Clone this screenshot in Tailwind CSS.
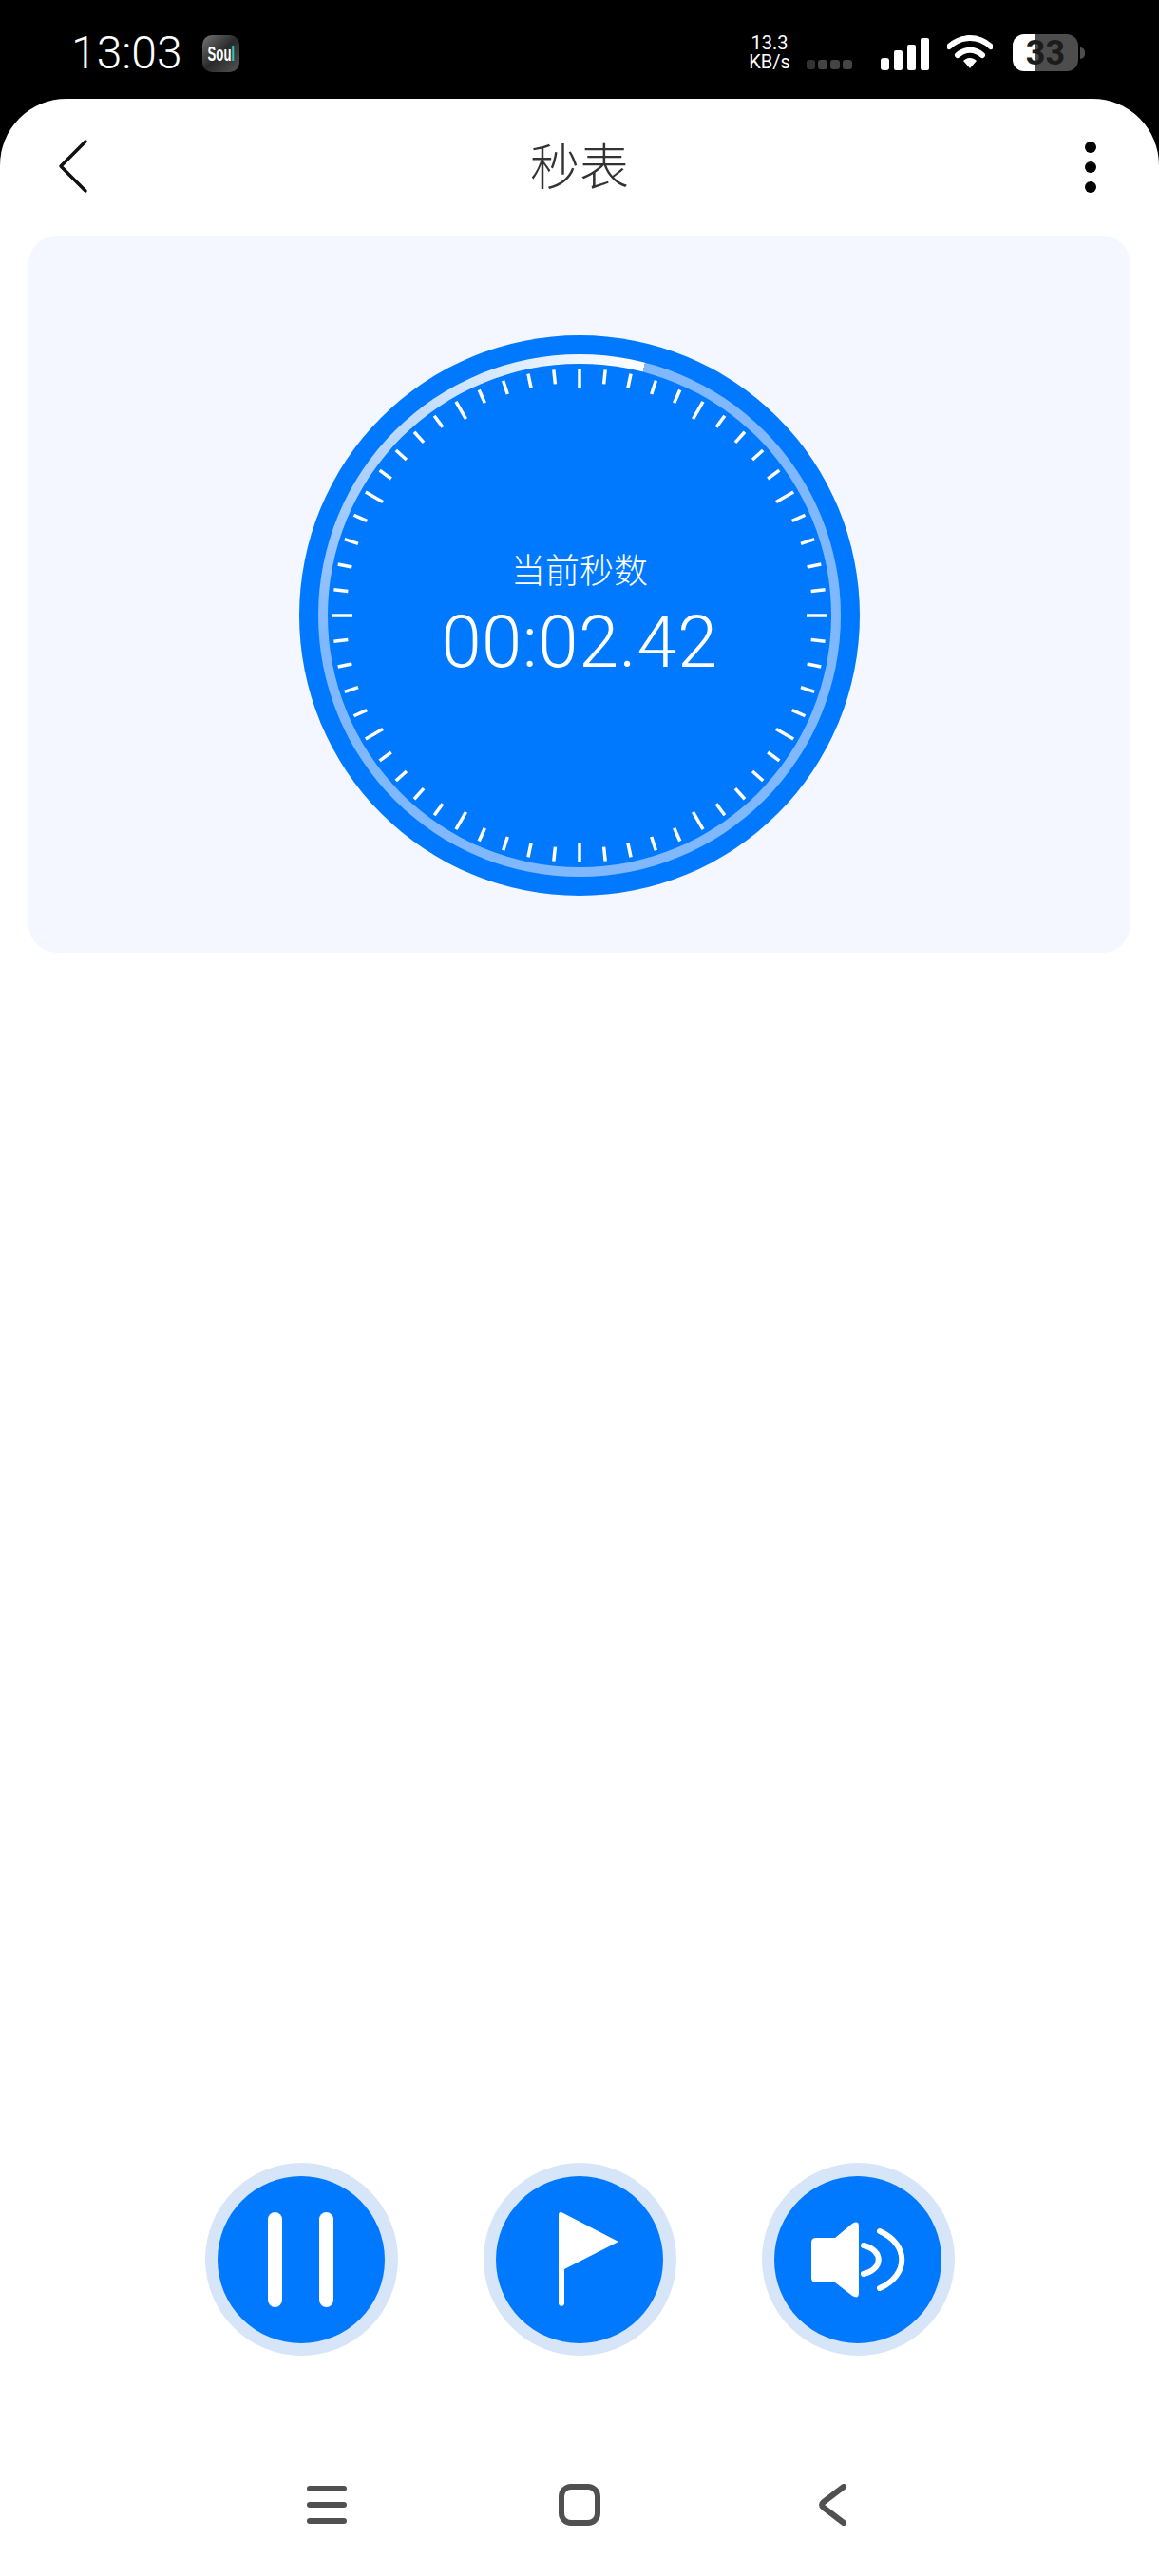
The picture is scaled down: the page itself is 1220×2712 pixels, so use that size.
<!DOCTYPE html>
<html lang="zh">
<head>
    <meta charset="UTF-8">
    <meta name="viewport" content="width=device-width, initial-scale=1.0">
    <title>秒表</title>
    <script src="https://cdn.jsdelivr.net/npm/@tailwindcss/browser@4"></script>
</head>
<body class="bg-black font-['Roboto','Noto_Sans_CJK_SC',sans-serif]">
    <div class="w-[1220px] h-[2712px] flex flex-col overflow-hidden">
        <!-- status bar -->
        <div class="h-[104px] shrink-0 relative flex items-start text-white">
            <div class="ml-[75px] mt-[30px] w-[116px] text-[48px] leading-[52px] font-light whitespace-nowrap">13:03</div>
            <div class="ml-[22px] mt-[37px] w-[39px] h-[39px] rounded-[10px] bg-gradient-to-br from-[#777777] via-[#2a2a2a] to-[#555555] flex items-center justify-center">
                <span class="font-['Liberation_Sans',sans-serif] font-bold text-[22px] leading-none scale-x-[0.6] whitespace-nowrap">Sou<span class="text-[#1fd0c8]">l</span></span>
            </div>
            <div class="ml-auto mt-[35px] w-[44px] text-[20px] leading-[20px] text-center mr-[17px]">13.3<br>KB/s</div>
            <div class="mt-[63px] flex gap-[3px] mr-[30px]">
                <span class="w-[9px] h-[10px] rounded-[3px] bg-[#333333]"></span>
                <span class="w-[10px] h-[10px] rounded-[3px] bg-[#444444]"></span>
                <span class="w-[10px] h-[10px] rounded-[3px] bg-[#444444]"></span>
                <span class="w-[10px] h-[10px] rounded-[3px] bg-[#444444]"></span>
            </div>
            <div class="mt-[40px] h-[34px] flex items-end gap-[5px] mr-[19px]">
                <span class="w-[9px] h-[13px] rounded-[3px] bg-white"></span>
                <span class="w-[9px] h-[21px] rounded-[2px] bg-white"></span>
                <span class="w-[9px] h-[27px] rounded-[2px] bg-white"></span>
                <span class="w-[9px] h-[34px] rounded-[2px] bg-white"></span>
            </div>
            <svg class="mt-[36px] mr-[21px]" width="48" height="37" viewBox="0 0 48 37">
                <path d="M2 13 C15 1 33 1 46 13" fill="none" stroke="#fff" stroke-width="6" stroke-linecap="round"/>
                <path d="M11 22 C19 15 29 15 37 22" fill="none" stroke="#fff" stroke-width="6" stroke-linecap="round"/>
                <path d="M17 28 C21 24 27 24 31 28 L24 36 Z" fill="#fff"/>
            </svg>
            <div class="mt-[36px] mr-[85px] relative w-[69px] h-[39px] rounded-[12px] overflow-visible">
                <div class="absolute inset-0 rounded-[12px] overflow-hidden flex">
                    <div class="w-[23px] bg-white"></div>
                    <div class="flex-1 bg-[#4d4d4d]"></div>
                </div>
                <div class="absolute inset-0 flex items-center justify-center text-[36px] leading-none font-bold text-[#1c1c1c]">33</div>
                <div class="absolute left-[71px] top-[14px] w-[5px] h-[12px] rounded-r-full bg-[#4d4d4d]"></div>
            </div>
        </div>

        <!-- page -->
        <div class="flex-1 bg-white rounded-t-[70px] flex flex-col">
            <div class="h-[144px] shrink-0 flex items-center justify-between pl-[60px] pr-[66px] relative">
                <svg width="34" height="60" viewBox="0 0 34 60" class="-mt-[2px]">
                    <path d="M30 4 L4 30 L30 56" fill="none" stroke="#111111" stroke-width="3.5" stroke-linecap="round" stroke-linejoin="round"/>
                </svg>
                <div class="absolute left-0 right-0 text-center text-[52px] leading-[60px] font-light text-[#333333] mt-[4px]">秒表</div>
                <div class="flex flex-col gap-[9px]">
                    <span class="w-[12px] h-[12px] rounded-full bg-black"></span>
                    <span class="w-[12px] h-[12px] rounded-full bg-black"></span>
                    <span class="w-[12px] h-[12px] rounded-full bg-black"></span>
                </div>
            </div>

            <!-- stopwatch card -->
            <div class="mx-[30px] h-[755px] shrink-0 rounded-[30px] bg-[#f4f7ff] flex justify-center pt-[105px]">
                <div class="w-[590px] h-[590px] rounded-full bg-[#0079ff] flex items-center justify-center relative">
                    <div class="w-[550px] h-[550px] rounded-full bg-[conic-gradient(from_14.5deg,#80b8ff_0deg,#80b8ff_250deg,#ffffff_360deg)] flex items-center justify-center">
                        <div class="w-[530px] h-[530px] rounded-full bg-[#0079ff] flex flex-col items-center text-white pt-[199px]">
                            <div class="text-[36px] leading-[40px] font-light">当前秒数</div>
                            <div class="mt-[14px] text-[76px] leading-[80px] font-light tracking-[0.5px]">00:02.42</div>
                        </div>
                    </div>
                    <svg id="ticks" class="absolute inset-0" width="590" height="590" viewBox="-295 -295 590 590"></svg>
                </div>
            </div>

            <!-- controls -->
            <div class="mt-auto flex justify-center gap-[90px]">
                <div class="w-[203px] h-[203px] rounded-full bg-[#d6e6f8] flex items-center justify-center">
                    <svg class="rounded-full bg-[#0079ff]" width="176" height="176" viewBox="0 0 176 176">
                        <rect x="53" y="38" width="15" height="100" rx="7.5" fill="#fff"/>
                        <rect x="107" y="38" width="15" height="100" rx="7.5" fill="#fff"/>
                    </svg>
                </div>
                <div class="w-[203px] h-[203px] rounded-full bg-[#d6e6f8] flex items-center justify-center">
                    <svg class="rounded-full bg-[#0079ff]" width="176" height="176" viewBox="0 0 176 176">
                        <path d="M66 41 Q66 36 71 39 L129 69 L72 98 L72 135 Q69 139 66 135 Z" fill="#fff"/>
                    </svg>
                </div>
                <div class="w-[203px] h-[203px] rounded-full bg-[#d6e6f8] flex items-center justify-center">
                    <svg class="rounded-full bg-[#0079ff]" width="176" height="176" viewBox="0 0 176 176">
                        <path d="M44 65 L64 65 L82 50 Q89 46 89 53 L89 123 Q89 130 82 126 L64 112 L44 112 Q39 112 39 107 L39 70 Q39 65 44 65 Z" fill="#fff"/>
                        <path d="M94 73 C115 78 115 98 94 103" fill="none" stroke="#fff" stroke-width="6" stroke-linecap="round"/>
                        <path d="M111 58 C142 72 142 104 111 118" fill="none" stroke="#fff" stroke-width="6" stroke-linecap="round"/>
                    </svg>
                </div>
            </div>

            <!-- nav bar -->
            <div class="h-[232px] shrink-0 pt-[135px] flex justify-center items-start gap-[206px]">
                <svg width="60" height="44" viewBox="0 0 60 44">
                    <path d="M12 5 H48 M12 22 H48 M12 39 H48" fill="none" stroke="#505050" stroke-width="6" stroke-linecap="round"/>
                </svg>
                <svg width="60" height="44" viewBox="0 0 60 44">
                    <rect x="11" y="3" width="38" height="38" rx="10" fill="none" stroke="#505050" stroke-width="6"/>
                </svg>
                <svg width="60" height="44" viewBox="0 0 60 44">
                    <path d="M42 3 L21 19 Q17 22 21 25 L42 41" fill="none" stroke="#505050" stroke-width="6" stroke-linecap="round" stroke-linejoin="round"/>
                </svg>
            </div>
        </div>
    </div>

    <script>
        // 60 dial ticks, every fifth one is longer
        let ticks = "";
        for (let i = 0; i < 60; i++) {
            let major = i % 5 === 0;
            ticks += `<line x1="0" y1="-260" x2="0" y2="${major ? -239 : -245}" stroke="#fff" stroke-width="3.5" transform="rotate(${i * 6})"/>`;
        }
        document.getElementById("ticks").innerHTML = ticks;
    </script>
</body>
</html>
